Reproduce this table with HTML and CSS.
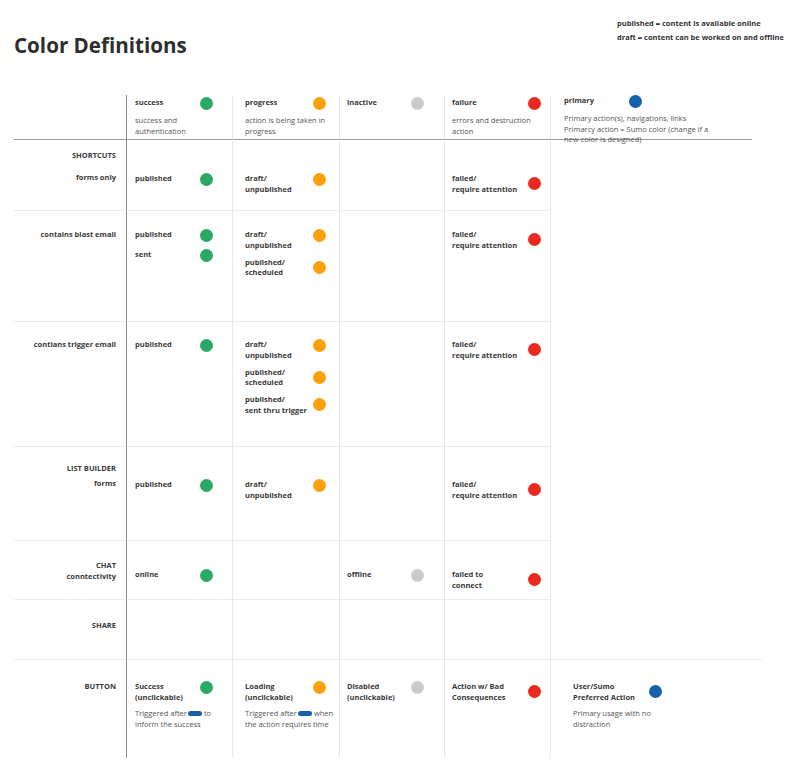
FILE: index.html
```html
<!DOCTYPE html>
<html lang="en">
<head>
<meta charset="utf-8">
<title>Color Definitions</title>
<link rel="stylesheet" href="styles.css">
</head>
<body>
<div class="page">
  <header class="head">
    <h1 class="title">Color Definitions</h1>
    <div class="note">
      <p>published = content is available online</p>
      <p>draft = content can be worked on and offline</p>
    </div>
  </header>

  <div class="table">
    <!-- header row -->
    <div class="cell c0 hd"></div>
    <div class="cell c1 hd">
      <div class="item"><span class="t">success</span><i class="dot green"></i></div>
      <p class="desc">success and<br>authentication</p>
    </div>
    <div class="cell c2 hd">
      <div class="item"><span class="t">progress</span><i class="dot orange"></i></div>
      <p class="desc">action is being taken in<br>progress</p>
    </div>
    <div class="cell c3 hd">
      <div class="item"><span class="t">inactive</span><i class="dot gray"></i></div>
    </div>
    <div class="cell c4 hd">
      <div class="item"><span class="t">failure</span><i class="dot red"></i></div>
      <p class="desc">errors and destruction<br>action</p>
    </div>
    <div class="cell c5 hd">
      <div class="item prim"><span class="t">primary</span><i class="dot blue"></i></div>
      <p class="desc wide">Primary action(s), navigations, links</p>
      <p class="desc wide">Primarcy action = Sumo color (change if a<br>new color is designed)</p>
    </div>

    <!-- SHORTCUTS -->
    <div class="cell c0 r1">
      <p class="lab">SHORTCUTS</p>
      <p class="lab sub1">forms only</p>
    </div>
    <div class="cell c1 r1">
      <div class="item"><span class="t">published</span><i class="dot green"></i></div>
    </div>
    <div class="cell c2 r1">
      <div class="item"><span class="t">draft/<br>unpublished</span><i class="dot orange"></i></div>
    </div>
    <div class="cell c3 r1"></div>
    <div class="cell c4 r1">
      <div class="item mid"><span class="t">failed/<br>require attention</span><i class="dot red"></i></div>
    </div>
    <div class="cell c5 r1 open"></div>

    <!-- contains blast email -->
    <div class="cell c0 r2">
      <p class="lab">contains blast email</p>
    </div>
    <div class="cell c1 r2">
      <div class="item"><span class="t">published</span><i class="dot green"></i></div>
      <div class="item"><span class="t">sent</span><i class="dot green"></i></div>
    </div>
    <div class="cell c2 r2">
      <div class="item"><span class="t">draft/<br>unpublished</span><i class="dot orange"></i></div>
      <div class="item mid"><span class="t">published/<br>scheduled</span><i class="dot orange"></i></div>
    </div>
    <div class="cell c3 r2"></div>
    <div class="cell c4 r2">
      <div class="item mid"><span class="t">failed/<br>require attention</span><i class="dot red"></i></div>
    </div>
    <div class="cell c5 r2 open"></div>

    <!-- contians trigger email -->
    <div class="cell c0 r3">
      <p class="lab">contians trigger email</p>
    </div>
    <div class="cell c1 r3">
      <div class="item"><span class="t">published</span><i class="dot green"></i></div>
    </div>
    <div class="cell c2 r3">
      <div class="item"><span class="t">draft/<br>unpublished</span><i class="dot orange"></i></div>
      <div class="item mid"><span class="t">published/<br>scheduled</span><i class="dot orange"></i></div>
      <div class="item mid"><span class="t">published/<br>sent thru trigger</span><i class="dot orange"></i></div>
    </div>
    <div class="cell c3 r3"></div>
    <div class="cell c4 r3">
      <div class="item mid"><span class="t">failed/<br>require attention</span><i class="dot red"></i></div>
    </div>
    <div class="cell c5 r3 open"></div>

    <!-- LIST BUILDER -->
    <div class="cell c0 r4">
      <p class="lab">LIST BUILDER</p>
      <p class="lab sub4">forms</p>
    </div>
    <div class="cell c1 r4">
      <div class="item"><span class="t">published</span><i class="dot green"></i></div>
    </div>
    <div class="cell c2 r4">
      <div class="item"><span class="t">draft/<br>unpublished</span><i class="dot orange"></i></div>
    </div>
    <div class="cell c3 r4"></div>
    <div class="cell c4 r4">
      <div class="item mid"><span class="t">failed/<br>require attention</span><i class="dot red"></i></div>
    </div>
    <div class="cell c5 r4 open"></div>

    <!-- CHAT -->
    <div class="cell c0 r5">
      <p class="lab">CHAT<br>conntectivity</p>
    </div>
    <div class="cell c1 r5">
      <div class="item"><span class="t">online</span><i class="dot green"></i></div>
    </div>
    <div class="cell c2 r5"></div>
    <div class="cell c3 r5">
      <div class="item"><span class="t">offline</span><i class="dot gray"></i></div>
    </div>
    <div class="cell c4 r5">
      <div class="item mid"><span class="t">failed to<br>connect</span><i class="dot red"></i></div>
    </div>
    <div class="cell c5 r5 open"></div>

    <!-- SHARE -->
    <div class="cell c0 r6">
      <p class="lab">SHARE</p>
    </div>
    <div class="cell c1 r6"></div>
    <div class="cell c2 r6"></div>
    <div class="cell c3 r6"></div>
    <div class="cell c4 r6"></div>
    <div class="cell c5 r6 open"></div>

    <!-- BUTTON -->
    <div class="cell c0 r7">
      <p class="lab">BUTTON</p>
    </div>
    <div class="cell c1 r7">
      <div class="item"><span class="t">Success<br>(unclickable)</span><i class="dot green"></i></div>
      <p class="desc bdesc">Triggered after<i class="pill"></i>to<br>inform the success</p>
    </div>
    <div class="cell c2 r7">
      <div class="item"><span class="t">Loading<br>(unclickable)</span><i class="dot orange"></i></div>
      <p class="desc bdesc">Triggered after<i class="pill"></i>when<br>the action requires time</p>
    </div>
    <div class="cell c3 r7">
      <div class="item"><span class="t">Disabled<br>(unclickable)</span><i class="dot gray"></i></div>
    </div>
    <div class="cell c4 r7">
      <div class="item mid"><span class="t">Action w/ Bad<br>Consequences</span><i class="dot red"></i></div>
    </div>
    <div class="cell c5 r7 btn5">
      <div class="item mid pref"><span class="t">User/Sumo<br>Preferred Action</span><i class="dot blue"></i></div>
      <p class="desc bdesc">Primary usage with no<br>distraction</p>
    </div>
  </div>
</div>
</body>
</html>
```

FILE: styles.css
```css
* {
  box-sizing: border-box;
}

html, body {
  margin: 0;
  padding: 0;
  background: #ffffff;
}

body {
  font-family: "Open Sans", "Noto Sans", "Liberation Sans", sans-serif;
  color: #3a3a3a;
}

p {
  margin: 0;
}

.page {
  width: 800px;
  padding-left: 14px;
}

/* ---------- header ---------- */
.head {
  display: flex;
  height: 95px;
}

.title {
  margin: 32px 0 0 0;
  font-size: 20.6px;
  line-height: 27px;
  font-weight: 700;
  color: #2e2e2e;
  letter-spacing: 0;
}

.note {
  margin-left: auto;
  margin-top: 16px;
  width: 183px;
  font-size: 7.5px;
  line-height: 14px;
  font-weight: 700;
  color: #333333;
  white-space: nowrap;
}

/* ---------- table ---------- */
.table {
  display: grid;
  width: 748px;
  grid-template-columns: 112px 106px 107px 105px 106px 212px;
  grid-template-rows: 45px 70px 111px 125px 94px 59px 60px 99px;
  font-size: 7.5px;
  line-height: 10.5px;
}

.cell {
  min-width: 0;
}

.c1 { border-left: 1px solid #8c8c8c; padding-left: 8px; padding-right: 19.5px; }
.c2 { border-left: 1px solid #e8e8e8; padding-left: 12px; padding-right: 13.5px; }
.c3 { border-left: 1px solid #e8e8e8; padding-left: 7px; padding-right: 20.5px; }
.c4 { border-left: 1px solid #e8e8e8; padding-left: 7px; padding-right: 9.5px; }
.c5 { border-left: 1px solid #e8e8e8; padding-left: 13px; }

.c0 {
  padding-right: 10px;
  text-align: right;
}

/* header row */
.hd {
  border-bottom: 1px solid #9a9a9a;
  padding-top: 2px;
}

.c5.hd {
  margin-right: 10px;
}

/* body rows: light separators */
.r2, .r3, .r4, .r5, .r6, .r7 {
  border-top: 1px solid #ececec;
}

.open {
  border-top: 0;
}

.r1 { padding-top: 33px; }
.r2 { padding-top: 18px; }
.r3 { padding-top: 17px; }
.r4 { padding-top: 32px; }
.r5 { padding-top: 28px; }
.r6 { padding-top: 20px; }
.r7 { padding-top: 21px; }

.c0.r1 { padding-top: 10px; }
.c0.r4 { padding-top: 16px; }
.c0.r5 { padding-top: 19px; }

.lab {
  font-weight: 700;
  color: #3a3a3a;
  white-space: nowrap;
}

.sub1 { margin-top: 11.5px; }
.sub4 { margin-top: 4.5px; }

/* items */
.item {
  display: flex;
  align-items: flex-start;
}

.item + .item {
  margin-top: 6.5px;
}

.t {
  flex: 1;
  min-width: 0;
  font-weight: 700;
  color: #3a3a3a;
  white-space: nowrap;
}

.dot {
  flex: none;
  width: 13px;
  height: 13px;
  border-radius: 50%;
  display: block;
}

.item.mid .dot {
  align-self: center;
}

.green { background: #2ca866; }
.orange { background: #ffa10c; }
.gray { background: #c8ccce; }
.red { background: #ea2a1f; }
.blue { background: #1760ad; }

.prim {
  width: 78px;
  margin-top: -2px;
}

.pref {
  width: 89px;
}

.btn5 {
  padding-left: 22px;
}

/* descriptions */
.desc {
  margin-top: 5px;
  color: #555555;
  white-space: nowrap;
  font-weight: 400;
}

.desc.wide + .desc.wide {
  margin-top: 0;
}

.bdesc {
  margin-top: 6px;
}

.pill {
  display: inline-block;
  width: 14px;
  height: 5px;
  border-radius: 3px;
  background: #1760ad;
  margin: 0 2px 0 1px;
  vertical-align: 0;
}
```
